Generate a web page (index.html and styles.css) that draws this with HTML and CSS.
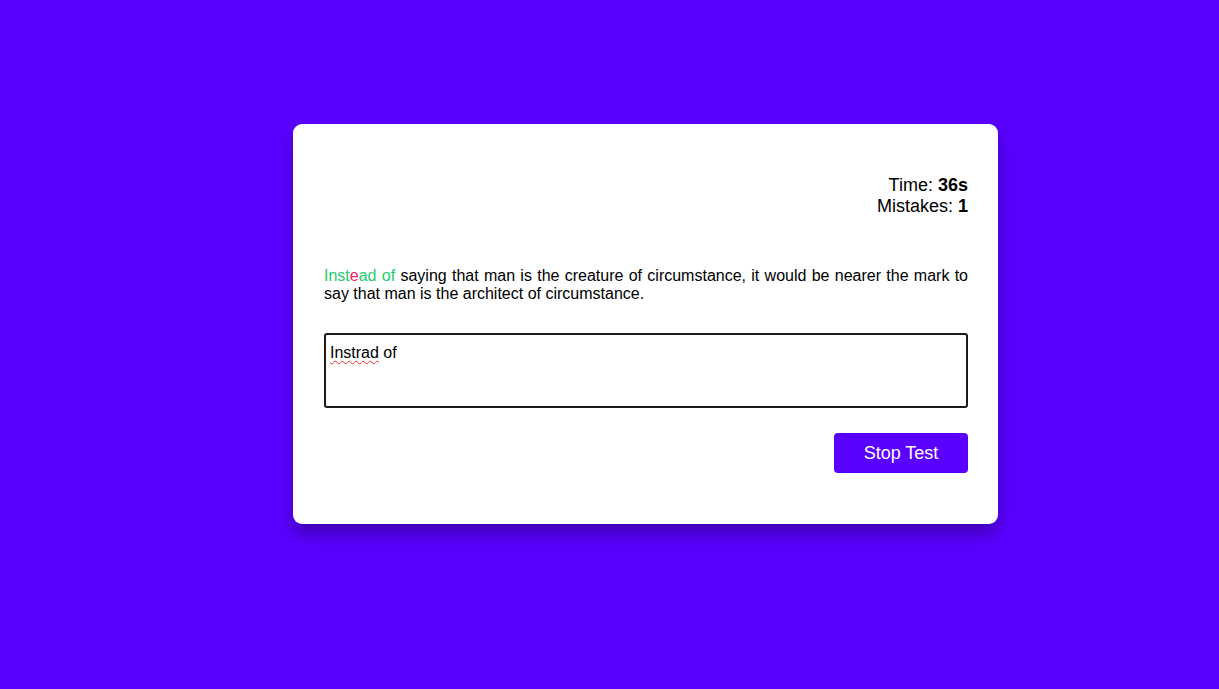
FILE: index.html
```html
<!DOCTYPE html>
<html lang="en">
<head>
<meta charset="utf-8">
<title>Typing Test</title>
<link rel="stylesheet" href="styles.css">
</head>
<body>
<div class="page">
  <div class="card">
    <div class="stats">
      <div>Time: <b>36s</b></div>
      <div>Mistakes: <b>1</b></div>
    </div>
    <p class="quote"><span class="ok">Inst</span><span class="bad">e</span><span class="ok">ad of</span> saying that man is the creature of circumstance, it would be nearer the mark to say that man is the architect of circumstance.</p>
    <div class="input" contenteditable="true" spellcheck="false"><span class="typo">Instrad</span> of</div>
    <div class="actions">
      <button class="btn">Stop Test</button>
    </div>
  </div>
</div>
</body>
</html>
```

FILE: styles.css
```css
html, body {
  margin: 0;
  padding: 0;
  height: 100%;
}
body {
  background: #5a00ff;
  font-family: "Liberation Sans", Arial, sans-serif;
  color: #000;
}
.page {
  padding-top: 124px;
  padding-left: 293px;
}
.card {
  width: 705px;
  box-sizing: border-box;
  background: #fff;
  border-radius: 9px;
  padding: 51px 30px 51px 31px;
  box-shadow: 0 10px 16px rgba(40, 0, 110, 0.5);
}
.stats {
  text-align: right;
  font-size: 18px;
  line-height: 21px;
}
.quote {
  margin: 50px 0 0 0;
  font-size: 16px;
  line-height: 18px;
  text-align: justify;
}
.ok { color: #1ccd6c; }
.bad { color: #f2235f; }
.input {
  margin-top: 30px;
  height: 75px;
  box-sizing: border-box;
  border: 2px solid #1a1a1a;
  border-radius: 3px;
  padding: 9px 4px;
  font-size: 16px;
  line-height: 18px;
  outline: none;
}
.typo {
  text-decoration: underline wavy #e03030;
  text-decoration-thickness: 1px;
  text-underline-offset: 2px;
}
.actions {
  display: flex;
  justify-content: flex-end;
  margin-top: 25px;
}
.btn {
  width: 134px;
  height: 40px;
  background: #5a00ff;
  color: #fff;
  border: none;
  border-radius: 4px;
  font-family: "Liberation Sans", Arial, sans-serif;
  font-size: 18px;
  cursor: pointer;
}
```
